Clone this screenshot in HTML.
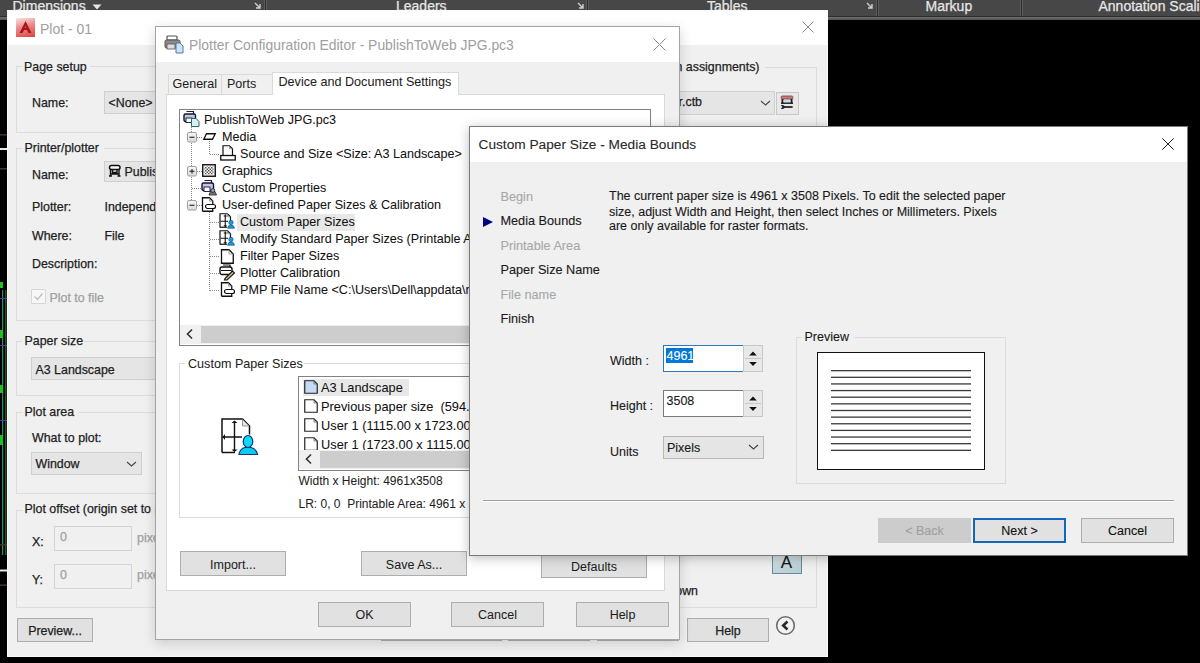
<!DOCTYPE html>
<html><head><meta charset="utf-8"><style>
html,body{margin:0;padding:0}
body{width:1200px;height:663px;overflow:hidden;position:relative;background:#000;font-family:"Liberation Sans",sans-serif}
.t{position:absolute;white-space:pre}
svg{overflow:visible}
</style></head><body>
<div style="position:absolute;left:0;top:0;width:1200px;height:16px;background:#474747"></div>
<div style="position:absolute;left:0px;top:16px;width:1200px;height:1px;background:#2e2e2e"></div>
<div style="position:absolute;left:0px;top:17px;width:1200px;height:3px;background:linear-gradient(#707070,#505050)"></div>
<div style="position:absolute;left:264px;top:0px;width:1px;height:16px;background:#5a5a5a"></div>
<div style="position:absolute;left:265px;top:0px;width:1px;height:16px;background:#2f2f2f"></div>
<div style="position:absolute;left:266px;top:0px;width:1px;height:16px;background:#5a5a5a"></div>
<div style="position:absolute;left:586px;top:0px;width:1px;height:16px;background:#5a5a5a"></div>
<div style="position:absolute;left:587px;top:0px;width:1px;height:16px;background:#2f2f2f"></div>
<div style="position:absolute;left:588px;top:0px;width:1px;height:16px;background:#5a5a5a"></div>
<div style="position:absolute;left:876px;top:0px;width:1px;height:16px;background:#5a5a5a"></div>
<div style="position:absolute;left:877px;top:0px;width:1px;height:16px;background:#2f2f2f"></div>
<div style="position:absolute;left:878px;top:0px;width:1px;height:16px;background:#5a5a5a"></div>
<div style="position:absolute;left:1020px;top:0px;width:1px;height:16px;background:#5a5a5a"></div>
<div style="position:absolute;left:1021px;top:0px;width:1px;height:16px;background:#2f2f2f"></div>
<div style="position:absolute;left:1022px;top:0px;width:1px;height:16px;background:#5a5a5a"></div>
<div class="t" style="left:12.5px;top:-1.20px;font-size:14px;line-height:14px;color:#e6e6e6;-webkit-text-stroke:0.25px #e6e6e6;">Dimensions</div>
<div class="t" style="left:396px;top:-1.20px;font-size:14px;line-height:14px;color:#e6e6e6;-webkit-text-stroke:0.25px #e6e6e6;">Leaders</div>
<div class="t" style="left:707px;top:-1.20px;font-size:14px;line-height:14px;color:#e6e6e6;-webkit-text-stroke:0.25px #e6e6e6;">Tables</div>
<div class="t" style="left:925.5px;top:-1.20px;font-size:14px;line-height:14px;color:#e6e6e6;-webkit-text-stroke:0.25px #e6e6e6;">Markup</div>
<div class="t" style="left:1098.5px;top:-1.20px;font-size:14px;line-height:14px;color:#e6e6e6;-webkit-text-stroke:0.25px #e6e6e6;">Annotation Scaling</div>
<svg style="position:absolute;left:92px;top:4px;" width="10" height="6" viewBox="0 0 10 6"><polygon points="0.5,0.5 9.5,0.5 5,5.5" fill="#e6e6e6"/></svg>
<svg style="position:absolute;left:254px;top:2px;" width="7" height="7" viewBox="0 0 7 7"><path d="M1,1 L5.5,5.5 M6,2 L6,6 L2,6" fill="none" stroke="#d0d0d0" stroke-width="1.4"/></svg>
<svg style="position:absolute;left:577px;top:2px;" width="7" height="7" viewBox="0 0 7 7"><path d="M1,1 L5.5,5.5 M6,2 L6,6 L2,6" fill="none" stroke="#d0d0d0" stroke-width="1.4"/></svg>
<svg style="position:absolute;left:865.5px;top:2px;" width="7" height="7" viewBox="0 0 7 7"><path d="M1,1 L5.5,5.5 M6,2 L6,6 L2,6" fill="none" stroke="#d0d0d0" stroke-width="1.4"/></svg>
<svg style="position:absolute;left:0px;top:100px;" width="7" height="520" viewBox="0 0 7 520">
<rect x="0" y="34" width="7" height="1.5" fill="#4a302c"/>
<rect x="0" y="48" width="7" height="2" fill="#e8e8e8"/>
<rect x="0" y="68" width="7" height="1.5" fill="#4a302c"/>
<rect x="2" y="190" width="1.2" height="265" fill="#2f8f7f"/>
<rect x="5" y="190" width="1.5" height="265" fill="#3aa03a" opacity="0.55"/>
<rect x="0" y="182" width="3" height="6" fill="#20c020"/>
<rect x="0" y="230" width="3" height="8" fill="#20c020"/>
<rect x="0" y="285" width="3" height="8" fill="#20c020"/>
<rect x="0" y="335" width="3" height="10" fill="#20c020"/>
<rect x="0" y="198" width="7" height="1" fill="#5a3aa0"/>
<rect x="0" y="245" width="7" height="1" fill="#5a3aa0"/>
<rect x="0" y="320" width="7" height="1" fill="#5a3aa0"/>
<rect x="0" y="444" width="7" height="1.5" fill="#4a302c"/>
<rect x="0" y="469.5" width="7" height="2" fill="#e8e8e8"/>
<rect x="0" y="484.5" width="7" height="1.5" fill="#4a302c"/>
</svg>
<div style="position:absolute;left:7px;top:10px;width:821px;height:647px;background:#f0f0f0;border:1px solid #fafafa;box-sizing:border-box;"></div>
<div style="position:absolute;left:8px;top:11px;width:819px;height:34px;background:#ffffff"></div>
<div style="position:absolute;left:16px;top:18px;width:19px;height:19px;background:linear-gradient(165deg,#fbe4e4,#ec8a8a 45%,#d84444);"></div>
<svg style="position:absolute;left:16px;top:18px;" width="19" height="19" viewBox="0 0 19 19"><path d="M9.5,3 L3.5,15 L6.5,15 L8,12 L11,12 L12.5,15 L15.5,15 Z" fill="#a8141a"/><path d="M9.5,7 L8.5,10 L10.5,10 Z" fill="#d84848"/></svg>
<div class="t" style="left:40px;top:21.80px;font-size:14px;line-height:14px;color:#a0a0a0;-webkit-text-stroke:0.25px #a0a0a0;-webkit-text-stroke:0">Plot - 01</div>
<svg style="position:absolute;left:802px;top:21px;" width="12" height="12" viewBox="0 0 12 12"><path d="M0.5,0.5 L11.5,11.5 M11.5,0.5 L0.5,11.5" stroke="#8a8a8a" stroke-width="1"/></svg>
<div style="position:absolute;left:16px;top:66px;width:282px;height:65px;border:1px solid #dcdcdc;"></div>
<div style="position:absolute;left:22px;top:62px;width:68px;height:10px;background:#f0f0f0"></div>
<div class="t" style="left:24px;top:60.66px;font-size:12.4px;line-height:12.4px;color:#1e1e1e;-webkit-text-stroke:0.25px #1e1e1e;">Page setup</div>
<div class="t" style="left:32px;top:96.66px;font-size:12.4px;line-height:12.4px;color:#1e1e1e;-webkit-text-stroke:0.25px #1e1e1e;">Name:</div>
<div style="position:absolute;left:104px;top:91px;width:194px;height:21px;background:#e5e5e5;border:1px solid #cfcfcf;"></div>
<div class="t" style="left:108.5px;top:96.66px;font-size:12.4px;line-height:12.4px;color:#1e1e1e;-webkit-text-stroke:0.25px #1e1e1e;">&lt;None&gt;</div>
<div style="position:absolute;left:16px;top:148px;width:282px;height:171px;border:1px solid #dcdcdc;"></div>
<div style="position:absolute;left:22px;top:142px;width:82px;height:10px;background:#f0f0f0"></div>
<div class="t" style="left:24.5px;top:141.96px;font-size:12.4px;line-height:12.4px;color:#1e1e1e;-webkit-text-stroke:0.25px #1e1e1e;">Printer/plotter</div>
<div class="t" style="left:32px;top:168.66px;font-size:12.4px;line-height:12.4px;color:#1e1e1e;-webkit-text-stroke:0.25px #1e1e1e;">Name:</div>
<div style="position:absolute;left:104px;top:161px;width:194px;height:19px;background:#e5e5e5;border:1px solid #cfcfcf;"></div>
<svg style="position:absolute;left:108px;top:164px;" width="14" height="14" viewBox="0 0 14 14"><rect x="1.5" y="1.5" width="10.5" height="4" rx="2" fill="#fff" stroke="#111" stroke-width="1.5"/><path d="M2.5,5.5 V11.5 M11,5.5 V11.5 M4.5,6 V8.5 H9 V6 M1,12 H4 M9.5,12 H12.5 M2.5,10 H11" fill="none" stroke="#111" stroke-width="1.4"/></svg>
<div class="t" style="left:124.5px;top:165.96px;font-size:12.4px;line-height:12.4px;color:#1e1e1e;-webkit-text-stroke:0.25px #1e1e1e;">PublishToWeb</div>
<div class="t" style="left:32px;top:201.16px;font-size:12.4px;line-height:12.4px;color:#1e1e1e;-webkit-text-stroke:0.25px #1e1e1e;">Plotter:</div>
<div class="t" style="left:104.5px;top:201.16px;font-size:12.4px;line-height:12.4px;color:#1e1e1e;-webkit-text-stroke:0.25px #1e1e1e;">Independent</div>
<div class="t" style="left:32px;top:229.66px;font-size:12.4px;line-height:12.4px;color:#1e1e1e;-webkit-text-stroke:0.25px #1e1e1e;">Where:</div>
<div class="t" style="left:104.5px;top:229.66px;font-size:12.4px;line-height:12.4px;color:#1e1e1e;-webkit-text-stroke:0.25px #1e1e1e;">File</div>
<div class="t" style="left:32px;top:258.16px;font-size:12.4px;line-height:12.4px;color:#1e1e1e;-webkit-text-stroke:0.25px #1e1e1e;">Description:</div>
<div style="position:absolute;left:31px;top:289px;width:15px;height:15px;border:1px solid #d6d6d6;box-sizing:border-box;background:#f7f7f7;border-radius:1px"></div>
<svg style="position:absolute;left:33px;top:291px;" width="11" height="11" viewBox="0 0 11 11"><polyline points="1.5,5.5 4.5,8.5 9.5,2.5" fill="none" stroke="#bdbdbd" stroke-width="1.3"/></svg>
<div class="t" style="left:49.5px;top:292.16px;font-size:12.4px;line-height:12.4px;color:#a0a0a0;-webkit-text-stroke:0.25px #a0a0a0;">Plot to file</div>
<div style="position:absolute;left:16px;top:341px;width:282px;height:53px;border:1px solid #dcdcdc;"></div>
<div style="position:absolute;left:22px;top:336px;width:62px;height:10px;background:#f0f0f0"></div>
<div class="t" style="left:24.5px;top:334.96px;font-size:12.4px;line-height:12.4px;color:#1e1e1e;-webkit-text-stroke:0.25px #1e1e1e;">Paper size</div>
<div style="position:absolute;left:31px;top:357px;width:267px;height:21px;background:#e5e5e5;border:1px solid #cfcfcf;"></div>
<div class="t" style="left:35.5px;top:363.66px;font-size:12.4px;line-height:12.4px;color:#1e1e1e;-webkit-text-stroke:0.25px #1e1e1e;">A3 Landscape</div>
<div style="position:absolute;left:16px;top:412px;width:282px;height:80px;border:1px solid #dcdcdc;"></div>
<div style="position:absolute;left:22px;top:407px;width:56px;height:10px;background:#f0f0f0"></div>
<div class="t" style="left:24.5px;top:405.96px;font-size:12.4px;line-height:12.4px;color:#1e1e1e;-webkit-text-stroke:0.25px #1e1e1e;">Plot area</div>
<div class="t" style="left:32px;top:432.16px;font-size:12.4px;line-height:12.4px;color:#1e1e1e;-webkit-text-stroke:0.25px #1e1e1e;">What to plot:</div>
<div style="position:absolute;left:31px;top:452px;width:109px;height:21px;background:#e5e5e5;border:1px solid #cfcfcf;"></div>
<div class="t" style="left:35.5px;top:458.16px;font-size:12.4px;line-height:12.4px;color:#1e1e1e;-webkit-text-stroke:0.25px #1e1e1e;">Window</div>
<svg style="position:absolute;left:126.0px;top:459.5px;" width="11" height="8" viewBox="0 0 11 8"><polyline points="1,2 5.5,6 10,2" fill="none" stroke="#444" stroke-width="1.1"/></svg>
<div style="position:absolute;left:16px;top:510px;width:282px;height:96px;border:1px solid #dcdcdc;"></div>
<div style="position:absolute;left:22px;top:505px;width:140px;height:10px;background:#f0f0f0"></div>
<div class="t" style="left:24.5px;top:503.46px;font-size:12.4px;line-height:12.4px;color:#1e1e1e;-webkit-text-stroke:0.25px #1e1e1e;">Plot offset (origin set to printable area)</div>
<div class="t" style="left:32px;top:536.16px;font-size:12.4px;line-height:12.4px;color:#1e1e1e;-webkit-text-stroke:0.25px #1e1e1e;">X:</div>
<div style="position:absolute;left:54px;top:526px;width:78px;height:25px;border:1px solid #d4d4d4;box-sizing:border-box;background:#f0f0f0"></div>
<div class="t" style="left:60px;top:531.16px;font-size:12.4px;line-height:12.4px;color:#a0a0a0;-webkit-text-stroke:0.25px #a0a0a0;">0</div>
<div class="t" style="left:137px;top:531.66px;font-size:12.4px;line-height:12.4px;color:#a0a0a0;-webkit-text-stroke:0.25px #a0a0a0;">pixels</div>
<div class="t" style="left:32px;top:573.66px;font-size:12.4px;line-height:12.4px;color:#1e1e1e;-webkit-text-stroke:0.25px #1e1e1e;">Y:</div>
<div style="position:absolute;left:54px;top:564px;width:78px;height:25px;border:1px solid #d4d4d4;box-sizing:border-box;background:#f0f0f0"></div>
<div class="t" style="left:60px;top:569.16px;font-size:12.4px;line-height:12.4px;color:#a0a0a0;-webkit-text-stroke:0.25px #a0a0a0;">0</div>
<div class="t" style="left:137px;top:569.16px;font-size:12.4px;line-height:12.4px;color:#a0a0a0;-webkit-text-stroke:0.25px #a0a0a0;">pixels</div>
<div style="position:absolute;left:17px;top:618px;width:74px;height:22px;background:#e1e1e1;border:1px solid #adadad;"></div>
<div class="t" style="left:-145.0px;width:400px;text-align:center;top:624.66px;font-size:12.4px;line-height:12.4px;color:#1e1e1e;-webkit-text-stroke:0.25px #1e1e1e;">Preview...</div>
<div style="position:absolute;left:600px;top:67px;width:215px;height:539px;border:1px solid #dcdcdc;"></div>
<div style="position:absolute;left:640px;top:60px;width:125px;height:12px;background:#f0f0f0"></div>
<div class="t" style="left:600px;top:60.66px;font-size:12.4px;line-height:12.4px;color:#1e1e1e;-webkit-text-stroke:0.25px #1e1e1e;left:auto;right:440.5px">Plot style table (pen assignments)</div>
<div style="position:absolute;left:600px;top:91px;width:173px;height:22px;background:#e5e5e5;border:1px solid #cfcfcf;"></div>
<div class="t" style="left:600px;top:96.16px;font-size:12.4px;line-height:12.4px;color:#1e1e1e;-webkit-text-stroke:0.25px #1e1e1e;left:auto;right:498px">Grayscale color.ctb</div>
<svg style="position:absolute;left:760.0px;top:99px;" width="11" height="8" viewBox="0 0 11 8"><polyline points="1,2 5.5,6 10,2" fill="none" stroke="#444" stroke-width="1.1"/></svg>
<div style="position:absolute;left:776px;top:92px;width:21px;height:21px;background:#e8e8e8;border:1px solid #c8c8c8;"></div>
<svg style="position:absolute;left:780px;top:95px;" width="15" height="15" viewBox="0 0 15 15"><rect x="1" y="1" width="12" height="3" rx="1.5" fill="#c87c7c" stroke="#7a3a3a" stroke-width="0.8"/><rect x="1.5" y="4" width="2" height="4.5" fill="#2a1a1a"/><rect x="10.5" y="4" width="2" height="4.5" fill="#2a1a1a"/><rect x="3.5" y="5" width="7" height="2.2" fill="#c0dde8"/><rect x="1" y="7.5" width="12" height="1.4" fill="#1a1a1a"/><path d="M4,11 H12 L13.2,12 L12,13 H4 Z" fill="#3a3a3a"/><path d="M0.8,10 H3 L4.6,11 V13 L3,14 H0.8 L2.4,12 Z" fill="#222"/></svg>
<div style="position:absolute;left:772px;top:545px;width:28px;height:27px;background:linear-gradient(160deg,#e4ecee,#b2ccd2);border:1px solid #6a8a9a;"></div>
<div class="t" style="left:586.5px;width:400px;text-align:center;top:554.25px;font-size:17px;line-height:17px;color:#111;-webkit-text-stroke:0.25px #111;-webkit-text-stroke:0.1px #111">A</div>
<div class="t" style="left:600px;top:585.16px;font-size:12.4px;line-height:12.4px;color:#1e1e1e;-webkit-text-stroke:0.25px #1e1e1e;left:auto;right:502px">Plot upside-down</div>
<div style="position:absolute;left:381px;top:618px;width:119px;height:21px;background:#e1e1e1;border:1px solid #adadad;"></div>
<div style="position:absolute;left:508px;top:618px;width:80px;height:21px;background:#e1e1e1;border:1px solid #adadad;"></div>
<div style="position:absolute;left:597px;top:618px;width:80px;height:21px;background:#e1e1e1;border:1px solid #adadad;"></div>
<div style="position:absolute;left:687px;top:618px;width:80px;height:22px;background:#e1e1e1;border:1px solid #adadad;"></div>
<div class="t" style="left:528.0px;width:400px;text-align:center;top:624.66px;font-size:12.4px;line-height:12.4px;color:#1e1e1e;-webkit-text-stroke:0.25px #1e1e1e;">Help</div>
<svg style="position:absolute;left:775px;top:615px;" width="21" height="21" viewBox="0 0 21 21"><circle cx="10.5" cy="10.5" r="8.8" fill="#f2f2f2" stroke="#6a6a6a" stroke-width="1.6"/><polyline points="12.5,6.5 8.2,10.5 12.5,14.5" fill="none" stroke="#2a2a2a" stroke-width="2.6"/></svg>
<div style="position:absolute;left:155px;top:26px;width:525px;height:614px;background:#f0f0f0;border:1px solid #a4a4a4;box-sizing:border-box;box-shadow:0 3px 12px rgba(0,0,0,0.16)"></div>
<div style="position:absolute;left:156px;top:27px;width:523px;height:35px;background:#ffffff"></div>
<svg style="position:absolute;left:164px;top:35px;" width="21" height="18" viewBox="0 0 21 18"><rect x="3" y="1" width="10" height="4" rx="1" fill="#fff" stroke="#555" stroke-width="1.2"/><rect x="1" y="5" width="15" height="8" rx="1.5" fill="#8a8a8a" stroke="#555"/><rect x="3" y="9" width="8" height="5" fill="#ddd" stroke="#555" stroke-width="0.8"/><path d="M12,8 h4 l3,3 v7 h-7 z" fill="#cfe3f7" stroke="#4a78b0"/></svg>
<div class="t" style="left:189px;top:39.19px;font-size:13.9px;line-height:13.9px;color:#a0a0a0;-webkit-text-stroke:0.05px #a0a0a0;-webkit-text-stroke:0">Plotter Configuration Editor - PublishToWeb JPG.pc3</div>
<svg style="position:absolute;left:653px;top:38px;" width="13" height="13" viewBox="0 0 13 13"><path d="M0.5,0.5 L12.5,12.5 M12.5,0.5 L0.5,12.5" stroke="#8a8a8a" stroke-width="1"/></svg>
<div style="position:absolute;left:168px;top:74px;width:54px;height:20px;background:#f0f0f0;border:1px solid #dadada;border-bottom:none;box-sizing:border-box"></div>
<div style="position:absolute;left:221px;top:74px;width:52px;height:20px;background:#f0f0f0;border:1px solid #dadada;border-bottom:none;box-sizing:border-box"></div>
<div style="position:absolute;left:166px;top:94px;width:499px;height:497px;background:#ffffff;border:1px solid #d9d9d9;box-sizing:border-box"></div>
<div style="position:absolute;left:272px;top:72px;width:187px;height:23px;background:#ffffff;border:1px solid #dadada;border-bottom:none;box-sizing:border-box"></div>
<div class="t" style="left:172.5px;top:78.08px;font-size:12.5px;line-height:12.5px;color:#1e1e1e;-webkit-text-stroke:0.05px #1e1e1e;">General</div>
<div class="t" style="left:227px;top:78.08px;font-size:12.5px;line-height:12.5px;color:#1e1e1e;-webkit-text-stroke:0.05px #1e1e1e;">Ports</div>
<div class="t" style="left:278.5px;top:75.99px;font-size:12.6px;line-height:12.6px;color:#1e1e1e;-webkit-text-stroke:0.05px #1e1e1e;">Device and Document Settings</div>
<div style="position:absolute;left:179px;top:109px;width:472px;height:237px;background:#fff;border:1px solid #828282;box-sizing:border-box"></div>
<div style="position:absolute;left:237px;top:214px;width:118px;height:17px;background:#e8e8e8"></div>
<div class="t" style="left:204px;top:114.29px;font-size:12.6px;line-height:12.6px;color:#111;-webkit-text-stroke:0.05px #111;">PublishToWeb JPG.pc3</div>
<div class="t" style="left:222px;top:131.29px;font-size:12.6px;line-height:12.6px;color:#111;-webkit-text-stroke:0.05px #111;">Media</div>
<div class="t" style="left:240px;top:148.09px;font-size:12.6px;line-height:12.6px;color:#111;-webkit-text-stroke:0.05px #111;">Source and Size &lt;Size: A3 Landscape&gt;</div>
<div class="t" style="left:222px;top:165.09px;font-size:12.6px;line-height:12.6px;color:#111;-webkit-text-stroke:0.05px #111;">Graphics</div>
<div class="t" style="left:222px;top:182.09px;font-size:12.6px;line-height:12.6px;color:#111;-webkit-text-stroke:0.05px #111;">Custom Properties</div>
<div class="t" style="left:222px;top:199.09px;font-size:12.6px;line-height:12.6px;color:#111;-webkit-text-stroke:0.05px #111;">User-defined Paper Sizes &amp; Calibration</div>
<div class="t" style="left:240px;top:216.09px;font-size:12.6px;line-height:12.6px;color:#111;-webkit-text-stroke:0.05px #111;">Custom Paper Sizes</div>
<div class="t" style="left:240px;top:233.09px;font-size:12.6px;line-height:12.6px;color:#111;-webkit-text-stroke:0.05px #111;">Modify Standard Paper Sizes (Printable Area)</div>
<div class="t" style="left:240px;top:250.09px;font-size:12.6px;line-height:12.6px;color:#111;-webkit-text-stroke:0.05px #111;">Filter Paper Sizes</div>
<div class="t" style="left:240px;top:267.09px;font-size:12.6px;line-height:12.6px;color:#111;-webkit-text-stroke:0.05px #111;">Plotter Calibration</div>
<div class="t" style="left:240px;top:284.09px;font-size:12.6px;line-height:12.6px;color:#111;-webkit-text-stroke:0.05px #111;">PMP File Name &lt;C:\Users\Dell\appdata\roaming\autodesk&gt;</div>
<svg style="position:absolute;left:180px;top:110px;" width="60" height="190" viewBox="0 0 60 190">
<path d="M11.5,17 V23 M11.5,33 V57 M11.5,67 V91 M17,27.5 H23 M17,61.5 H23 M12,78.5 H22 M17,95.5 H23" fill="none" stroke="#8a8a8a" stroke-width="1" stroke-dasharray="1,1"/>
<path d="M29.5,31 V45 M30,44.5 H40" fill="none" stroke="#8a8a8a" stroke-width="1" stroke-dasharray="1,1"/>
<path d="M29.5,102 V181 M30,112.5 H40 M30,129.5 H40 M30,146.5 H40 M30,163.5 H40 M30,180.5 H40" fill="none" stroke="#8a8a8a" stroke-width="1" stroke-dasharray="1,1"/>
</svg>
<svg style="position:absolute;left:187px;top:132px;" width="10" height="11" viewBox="0 0 10 11"><defs><linearGradient id="eg" x1="0" y1="0" x2="0" y2="1"><stop offset="0" stop-color="#f8f8f8"/><stop offset="1" stop-color="#d8d8d8"/></linearGradient></defs><rect x="0.5" y="0.5" width="9" height="9.5" rx="1.5" fill="url(#eg)" stroke="#a0a0a0"/><path d="M2.5,5.25 H7.5" stroke="#222" stroke-width="1.1"/></svg>
<svg style="position:absolute;left:187px;top:166px;" width="10" height="11" viewBox="0 0 10 11"><defs><linearGradient id="eg" x1="0" y1="0" x2="0" y2="1"><stop offset="0" stop-color="#f8f8f8"/><stop offset="1" stop-color="#d8d8d8"/></linearGradient></defs><rect x="0.5" y="0.5" width="9" height="9.5" rx="1.5" fill="url(#eg)" stroke="#a0a0a0"/><path d="M2.5,5.25 H7.5" stroke="#222" stroke-width="1.1"/><path d="M5,3 V7.5" stroke="#222" stroke-width="1.1"/></svg>
<svg style="position:absolute;left:187px;top:200px;" width="10" height="11" viewBox="0 0 10 11"><defs><linearGradient id="eg" x1="0" y1="0" x2="0" y2="1"><stop offset="0" stop-color="#f8f8f8"/><stop offset="1" stop-color="#d8d8d8"/></linearGradient></defs><rect x="0.5" y="0.5" width="9" height="9.5" rx="1.5" fill="url(#eg)" stroke="#a0a0a0"/><path d="M2.5,5.25 H7.5" stroke="#222" stroke-width="1.1"/></svg>
<svg style="position:absolute;left:183px;top:111px;" width="17" height="16" viewBox="0 0 17 16"><path d="M3.5,0.5 H10.5 V3" fill="none" stroke="#1a1a3a" stroke-width="1.2"/>
<rect x="1" y="3" width="11.5" height="7.5" rx="1.5" fill="#c4c8dc" stroke="#14143a" stroke-width="1.4"/>
<rect x="3" y="7" width="6" height="4.5" fill="#fff" stroke="#14143a" stroke-width="0.9"/>
<path d="M8.5,7.5 H13 L16,10.5 V15.5 H8.5 Z" fill="#d8f0ec" stroke="#2a6a6a" stroke-width="1"/></svg>
<svg style="position:absolute;left:203px;top:133px;" width="13" height="7" viewBox="0 0 13 7"><polygon points="3.5,0.75 12.25,0.75 9.5,6.25 0.75,6.25" fill="none" stroke="#111" stroke-width="1.3"/></svg>
<svg style="position:absolute;left:220px;top:145px;" width="16" height="16" viewBox="0 0 16 16"><path d="M3,10 V0.75 H9.5 L12.5,3.75 V10" fill="#fff" stroke="#111" stroke-width="1.2"/><path d="M9.5,0.75 V3.75 H12.5" fill="none" stroke="#888" stroke-width="0.8"/>
<rect x="0.75" y="10.5" width="14.5" height="4.5" fill="#fff" stroke="#111" stroke-width="1.3"/></svg>
<svg style="position:absolute;left:202px;top:164px;" width="14" height="13" viewBox="0 0 14 13"><defs><pattern id="ck" width="3" height="3" patternUnits="userSpaceOnUse"><rect width="1.5" height="1.5" fill="#333"/><rect x="1.5" y="1.5" width="1.5" height="1.5" fill="#333"/></pattern></defs>
<rect x="0.75" y="0.75" width="12.5" height="11.5" fill="#fff" stroke="#111" stroke-width="1.4"/><rect x="2.5" y="2.5" width="9" height="8" fill="url(#ck)" opacity="0.8"/></svg>
<svg style="position:absolute;left:201px;top:180px;" width="17" height="16" viewBox="0 0 17 16"><path d="M3.5,0.5 H10.5 V3" fill="none" stroke="#1a1a3a" stroke-width="1.2"/>
<rect x="1" y="3" width="11.5" height="7.5" rx="1.5" fill="#c4c8dc" stroke="#14143a" stroke-width="1.4"/>
<rect x="3" y="7" width="6" height="4.5" fill="#fff" stroke="#14143a" stroke-width="0.9"/>
<path d="M8,15 H15.5 L14,11.5 H9.5 Z" fill="#777" stroke="#222" stroke-width="0.8"/><circle cx="11.75" cy="10.5" r="2" fill="#999" stroke="#222" stroke-width="0.8"/></svg>
<svg style="position:absolute;left:201px;top:197px;" width="15" height="15" viewBox="0 0 15 15"><path d="M1.5,14.25 V0.75 H8.5 L11.75,4 V7" fill="#fff" stroke="#111" stroke-width="1.3"/><path d="M8.5,0.75 V4 H11.75" fill="none" stroke="#888" stroke-width="0.8"/>
<path d="M1.5,14.25 H11.75 V12" fill="none" stroke="#111" stroke-width="1.3"/>
<rect x="4.5" y="7.5" width="10" height="4" rx="2" fill="#fff" stroke="#111" stroke-width="1.2"/></svg>
<svg style="position:absolute;left:219px;top:213px;" width="16" height="16" viewBox="0 0 16 16"><path d="M1,14.5 V0.75 H8.5 L11.5,3.75 V8" fill="#fff" stroke="#111" stroke-width="1.2"/><path d="M8.5,0.75 V3.75 H11.5" fill="none" stroke="#888" stroke-width="0.8"/>
<path d="M1,14.25 H8" stroke="#111" stroke-width="1.2"/><path d="M6.25,1.5 V14 M1.5,8.25 H9" stroke="#111" stroke-width="1.1"/>
<path d="M4.75,3 H7.75 M4.75,12.75 H7.75" stroke="#111" stroke-width="1"/>
<circle cx="12" cy="9.5" r="2.2" fill="#1e9ad6" stroke="#0a4a8a" stroke-width="0.6"/><path d="M8.5,15.25 Q9,12 12,12 Q15,12 15.5,15.25 Z" fill="#1e9ad6" stroke="#0a4a8a" stroke-width="0.6"/></svg>
<svg style="position:absolute;left:219px;top:230px;" width="16" height="16" viewBox="0 0 16 16"><path d="M1,14.5 V0.75 H8.5 L11.5,3.75 V8" fill="#fff" stroke="#111" stroke-width="1.2"/><path d="M8.5,0.75 V3.75 H11.5" fill="none" stroke="#888" stroke-width="0.8"/>
<path d="M1,14.25 H8" stroke="#111" stroke-width="1.2"/><path d="M6.25,1.5 V14 M1.5,8.25 H9" stroke="#111" stroke-width="1.1"/>
<path d="M4.75,3 H7.75 M4.75,12.75 H7.75" stroke="#111" stroke-width="1"/>
<circle cx="12" cy="9.5" r="2.2" fill="#1e9ad6" stroke="#0a4a8a" stroke-width="0.6"/><path d="M8.5,15.25 Q9,12 12,12 Q15,12 15.5,15.25 Z" fill="#1e9ad6" stroke="#0a4a8a" stroke-width="0.6"/></svg>
<svg style="position:absolute;left:220px;top:249px;" width="15" height="15" viewBox="0 0 15 15"><path d="M1.5,14.25 V0.75 H9 L13.25,5 V14.25 Z" fill="#fff" stroke="#111" stroke-width="1.3"/><path d="M9,0.75 V5 H13.25" fill="none" stroke="#888" stroke-width="0.8"/></svg>
<svg style="position:absolute;left:219px;top:264px;" width="17" height="16" viewBox="0 0 17 16"><path d="M4,1 H11 V3" fill="none" stroke="#111" stroke-width="1.2"/>
<rect x="1" y="3" width="12" height="7.5" rx="2" fill="#fff" stroke="#111" stroke-width="1.4"/>
<path d="M2,6.5 H12" stroke="#111" stroke-width="1"/>
<path d="M6,14.5 L13.5,7 L15.5,9 L8,16 L5.5,16 Z" fill="#d8c890" stroke="#111" stroke-width="1.1"/></svg>
<svg style="position:absolute;left:220px;top:282px;" width="15" height="15" viewBox="0 0 15 15"><path d="M1.5,14.25 V0.75 H8.5 L11.75,4 V7" fill="#fff" stroke="#111" stroke-width="1.3"/><path d="M8.5,0.75 V4 H11.75" fill="none" stroke="#888" stroke-width="0.8"/>
<path d="M1.5,14.25 H11.75 V12" fill="none" stroke="#111" stroke-width="1.3"/>
<rect x="4.5" y="7.5" width="10" height="4" rx="2" fill="#fff" stroke="#111" stroke-width="1.2"/></svg>
<div style="position:absolute;left:180px;top:325px;width:470px;height:19px;background:#f0f0f0"></div>
<div style="position:absolute;left:201px;top:326px;width:449px;height:17px;background:#cdcdcd"></div>
<svg style="position:absolute;left:185px;top:328px;" width="10" height="12" viewBox="0 0 10 12"><polyline points="7,1.5 2.5,6 7,10.5" fill="none" stroke="#333" stroke-width="1.6"/></svg>
<div style="position:absolute;left:179px;top:363px;width:470px;height:153px;border:1px solid #dcdcdc;"></div>
<div style="position:absolute;left:185px;top:357px;width:118px;height:12px;background:#fff"></div>
<div class="t" style="left:188px;top:357.99px;font-size:12.6px;line-height:12.6px;color:#1e1e1e;-webkit-text-stroke:0.05px #1e1e1e;">Custom Paper Sizes</div>
<div style="position:absolute;left:298px;top:376px;width:353px;height:95px;background:#fff;border:1px solid #828282;box-sizing:border-box"></div>
<div style="position:absolute;left:303px;top:379px;width:106px;height:17px;background:#e8e8e8"></div>
<svg style="position:absolute;left:304px;top:380px;" width="16" height="14" viewBox="0 0 16 14"><path d="M0.75,13.25 V0.75 H10 L13.25,4 V13.25 Z" fill="#c4dcf4" stroke="#222" stroke-width="1.2"/><path d="M10,0.75 V4 H13.25" fill="none" stroke="#666" stroke-width="0.8"/></svg>
<svg style="position:absolute;left:304px;top:399px;" width="16" height="14" viewBox="0 0 16 14"><path d="M0.75,13.25 V0.75 H10 L13.25,4 V13.25 Z" fill="#fff" stroke="#222" stroke-width="1.2"/><path d="M10,0.75 V4 H13.25" fill="none" stroke="#666" stroke-width="0.8"/></svg>
<svg style="position:absolute;left:304px;top:418px;" width="16" height="14" viewBox="0 0 16 14"><path d="M0.75,13.25 V0.75 H10 L13.25,4 V13.25 Z" fill="#fff" stroke="#222" stroke-width="1.2"/><path d="M10,0.75 V4 H13.25" fill="none" stroke="#666" stroke-width="0.8"/></svg>
<div style="position:absolute;left:299px;top:437px;width:30px;height:13px;overflow:hidden">
<svg style="position:absolute;left:5px;top:0px;" width="16" height="14" viewBox="0 0 16 14"><path d="M0.75,13.25 V0.75 H10 L13.25,4 V13.25 Z" fill="#fff" stroke="#222" stroke-width="1.2"/><path d="M10,0.75 V4 H13.25" fill="none" stroke="#666" stroke-width="0.8"/></svg>
</div>
<svg style="position:absolute;left:220px;top:417px;" width="40" height="40" viewBox="0 0 40 40"><path d="M2,35.5 V2 H22.5 L29.5,9 V17.5" fill="#fff" stroke="#111" stroke-width="1.5"/><path d="M22.5,2.5 V9 H29" fill="#e8e8e8" stroke="#999" stroke-width="1"/>
<path d="M2,35.5 H15" stroke="#111" stroke-width="1.5"/>
<path d="M14.5,5 V34 M2.5,20 H22" stroke="#111" stroke-width="1.4"/>
<path d="M11.5,6 L14.5,3.5 L17.5,6 Z M11.5,32.5 L14.5,35 L17.5,32.5 Z M5,17 L2.5,20 L5,23 Z" fill="#111"/>
<ellipse cx="28" cy="24.5" rx="4.8" ry="6" fill="#10d8f8" stroke="#0a3a7a" stroke-width="1.2"/>
<path d="M19,37.5 Q20,31.5 25,30.5 L31,30.5 Q36,31.5 37.5,37.5 Z" fill="#10c8f0" stroke="#0a3a7a" stroke-width="1.2"/></svg>
<div class="t" style="left:321px;top:382.32px;font-size:12.8px;line-height:12.8px;color:#111;-webkit-text-stroke:0.05px #111;">A3 Landscape</div>
<div class="t" style="left:321px;top:401.02px;font-size:12.8px;line-height:12.8px;color:#111;-webkit-text-stroke:0.05px #111;">Previous paper size  (594.00 x 420.00 MM)</div>
<div class="t" style="left:321px;top:419.82px;font-size:12.8px;line-height:12.8px;color:#111;-webkit-text-stroke:0.05px #111;">User 1 (1115.00 x 1723.00 Pixels)</div>
<div style="position:absolute;left:299px;top:433px;width:350px;height:17px;overflow:hidden">
<div class="t" style="left:22px;top:5.82px;font-size:12.8px;line-height:12.8px;color:#111;-webkit-text-stroke:0.05px #111;">User 1 (1723.00 x 1115.00 Pixels)</div>
</div>
<div style="position:absolute;left:299px;top:450px;width:351px;height:19px;background:#f0f0f0"></div>
<div style="position:absolute;left:320px;top:451px;width:330px;height:17px;background:#cdcdcd"></div>
<svg style="position:absolute;left:304px;top:453px;" width="10" height="12" viewBox="0 0 10 12"><polyline points="7,1.5 2.5,6 7,10.5" fill="none" stroke="#333" stroke-width="1.6"/></svg>
<div class="t" style="left:298.5px;top:474.90px;font-size:12px;line-height:12px;color:#1e1e1e;-webkit-text-stroke:0.05px #1e1e1e;">Width x Height: 4961x3508</div>
<div class="t" style="left:298.5px;top:497.80px;font-size:12px;line-height:12px;color:#1e1e1e;-webkit-text-stroke:0.05px #1e1e1e;">LR: 0, 0  Printable Area: 4961 x 3508</div>
<div style="position:absolute;left:180px;top:551px;width:104px;height:23px;background:#e1e1e1;border:1px solid #adadad;"></div>
<div class="t" style="left:33.0px;width:400px;text-align:center;top:558.58px;font-size:12.5px;line-height:12.5px;color:#1e1e1e;-webkit-text-stroke:0.05px #1e1e1e;">Import...</div>
<div style="position:absolute;left:361px;top:551px;width:104px;height:23px;background:#e1e1e1;border:1px solid #adadad;"></div>
<div class="t" style="left:214.0px;width:400px;text-align:center;top:558.58px;font-size:12.5px;line-height:12.5px;color:#1e1e1e;-webkit-text-stroke:0.05px #1e1e1e;">Save As...</div>
<div style="position:absolute;left:541px;top:554px;width:104px;height:22px;background:#e1e1e1;border:1px solid #adadad;"></div>
<div class="t" style="left:394.0px;width:400px;text-align:center;top:560.58px;font-size:12.5px;line-height:12.5px;color:#1e1e1e;-webkit-text-stroke:0.05px #1e1e1e;">Defaults</div>
<div style="position:absolute;left:318px;top:602px;width:91px;height:23px;background:#e1e1e1;border:1px solid #adadad;"></div>
<div class="t" style="left:164.5px;width:400px;text-align:center;top:609.08px;font-size:12.5px;line-height:12.5px;color:#1e1e1e;-webkit-text-stroke:0.05px #1e1e1e;">OK</div>
<div style="position:absolute;left:451px;top:602px;width:91px;height:23px;background:#e1e1e1;border:1px solid #adadad;"></div>
<div class="t" style="left:297.5px;width:400px;text-align:center;top:609.08px;font-size:12.5px;line-height:12.5px;color:#1e1e1e;-webkit-text-stroke:0.05px #1e1e1e;">Cancel</div>
<div style="position:absolute;left:576px;top:602px;width:91px;height:23px;background:#e1e1e1;border:1px solid #adadad;"></div>
<div class="t" style="left:422.5px;width:400px;text-align:center;top:609.08px;font-size:12.5px;line-height:12.5px;color:#1e1e1e;-webkit-text-stroke:0.05px #1e1e1e;">Help</div>
<div style="position:absolute;left:469px;top:126px;width:719px;height:430px;background:#f0f0f0;border:1px solid #7a7a7a;box-sizing:border-box;box-shadow:0 2px 11px rgba(0,0,0,0.26)"></div>
<div style="position:absolute;left:470px;top:127px;width:717px;height:35px;background:#ffffff"></div>
<div class="t" style="left:478.5px;top:138.05px;font-size:13.7px;line-height:13.7px;color:#2a2a2a;-webkit-text-stroke:0.12px #2a2a2a;-webkit-text-stroke:0.1px #2a2a2a">Custom Paper Size - Media Bounds</div>
<svg style="position:absolute;left:1162px;top:138px;" width="12" height="12" viewBox="0 0 12 12"><path d="M0.3,0.3 L11.7,11.7 M11.7,0.3 L0.3,11.7" stroke="#222" stroke-width="1"/></svg>
<div class="t" style="left:500.5px;top:190.71px;font-size:12.7px;line-height:12.7px;color:#a8a8a8;-webkit-text-stroke:0.12px #a8a8a8;">Begin</div>
<div class="t" style="left:500.5px;top:215.10px;font-size:12.7px;line-height:12.7px;color:#1a1a1a;-webkit-text-stroke:0.12px #1a1a1a;">Media Bounds</div>
<div class="t" style="left:500.5px;top:239.60px;font-size:12.7px;line-height:12.7px;color:#a8a8a8;-webkit-text-stroke:0.12px #a8a8a8;">Printable Area</div>
<div class="t" style="left:500.5px;top:263.80px;font-size:12.7px;line-height:12.7px;color:#1a1a1a;-webkit-text-stroke:0.12px #1a1a1a;">Paper Size Name</div>
<div class="t" style="left:500.5px;top:288.70px;font-size:12.7px;line-height:12.7px;color:#a8a8a8;-webkit-text-stroke:0.12px #a8a8a8;">File name</div>
<div class="t" style="left:500.5px;top:312.90px;font-size:12.7px;line-height:12.7px;color:#1a1a1a;-webkit-text-stroke:0.12px #1a1a1a;">Finish</div>
<svg style="position:absolute;left:482px;top:216px;" width="12" height="12" viewBox="0 0 12 12"><polygon points="1,1 11,6 1,11" fill="#000080"/></svg>
<div class="t" style="left:609px;top:190.38px;font-size:12.5px;line-height:12.5px;color:#1a1a1a;-webkit-text-stroke:0.12px #1a1a1a;">The current paper size is 4961 x 3508 Pixels. To edit the selected paper</div>
<div class="t" style="left:609px;top:205.57px;font-size:12.5px;line-height:12.5px;color:#1a1a1a;-webkit-text-stroke:0.12px #1a1a1a;">size, adjust Width and Height, then select Inches or Millimeters. Pixels</div>
<div class="t" style="left:609px;top:220.38px;font-size:12.5px;line-height:12.5px;color:#1a1a1a;-webkit-text-stroke:0.12px #1a1a1a;">are only available for raster formats.</div>
<div class="t" style="left:610px;top:354.88px;font-size:12.5px;line-height:12.5px;color:#1a1a1a;-webkit-text-stroke:0.12px #1a1a1a;">Width :</div>
<div class="t" style="left:610px;top:400.18px;font-size:12.5px;line-height:12.5px;color:#1a1a1a;-webkit-text-stroke:0.12px #1a1a1a;">Height :</div>
<div class="t" style="left:610px;top:446.07px;font-size:12.5px;line-height:12.5px;color:#1a1a1a;-webkit-text-stroke:0.12px #1a1a1a;">Units</div>
<div style="position:absolute;left:663px;top:345px;width:81px;height:27px;background:#fff;border:1px solid #2b79c2;box-sizing:border-box"></div>
<div style="position:absolute;left:743px;top:345px;width:20px;height:27px;background:#e8e8e8;border:1px solid #c8c8c8;box-sizing:border-box"></div>
<div style="position:absolute;left:745px;top:358px;width:16px;height:1px;background:#c8c8c8"></div>
<svg style="position:absolute;left:747px;top:348px;" width="12" height="9" viewBox="0 0 12 9"><polygon points="2.2,7.5 6,3.5 9.8,7.5" fill="#111"/></svg>
<svg style="position:absolute;left:747px;top:360px;" width="12" height="9" viewBox="0 0 12 9"><polygon points="2.2,2 6,6 9.8,2" fill="#111"/></svg>
<div style="position:absolute;left:666px;top:348px;width:27px;height:15px;background:#0078d7"></div>
<div class="t" style="left:666.5px;top:350.07px;font-size:12.5px;line-height:12.5px;color:#ffffff;-webkit-text-stroke:0.12px #ffffff;">4961</div>
<div style="position:absolute;left:663px;top:390px;width:81px;height:27px;background:#fff;border:1px solid #7a7a7a;box-sizing:border-box"></div>
<div style="position:absolute;left:743px;top:390px;width:20px;height:27px;background:#e8e8e8;border:1px solid #c8c8c8;box-sizing:border-box"></div>
<div style="position:absolute;left:745px;top:403px;width:16px;height:1px;background:#c8c8c8"></div>
<svg style="position:absolute;left:747px;top:393px;" width="12" height="9" viewBox="0 0 12 9"><polygon points="2.2,7.5 6,3.5 9.8,7.5" fill="#111"/></svg>
<svg style="position:absolute;left:747px;top:405px;" width="12" height="9" viewBox="0 0 12 9"><polygon points="2.2,2 6,6 9.8,2" fill="#111"/></svg>
<div class="t" style="left:666.5px;top:395.47px;font-size:12.5px;line-height:12.5px;color:#1a1a1a;-webkit-text-stroke:0.12px #1a1a1a;">3508</div>
<div style="position:absolute;left:663px;top:436px;width:99px;height:21px;background:#e5e5e5;border:1px solid #b8b8b8;"></div>
<div class="t" style="left:667px;top:441.57px;font-size:12.5px;line-height:12.5px;color:#1a1a1a;-webkit-text-stroke:0.12px #1a1a1a;">Pixels</div>
<svg style="position:absolute;left:747.5px;top:443px;" width="11" height="8" viewBox="0 0 11 8"><polyline points="1,2 5.5,6 10,2" fill="none" stroke="#444" stroke-width="1.1"/></svg>
<div style="position:absolute;left:796px;top:337px;width:208px;height:145px;border:1px solid #dcdcdc;"></div>
<div style="position:absolute;left:802px;top:330px;width:52px;height:12px;background:#f0f0f0"></div>
<div class="t" style="left:804.5px;top:330.57px;font-size:12.5px;line-height:12.5px;color:#1a1a1a;-webkit-text-stroke:0.12px #1a1a1a;">Preview</div>
<div style="position:absolute;left:817px;top:352px;width:168px;height:118px;background:#fff;border:1.5px solid #111;box-sizing:border-box"></div>
<svg style="position:absolute;left:831px;top:370px;" width="140" height="82" viewBox="0 0 140 82"><rect x="0" y="0.00" width="140" height="1.3" fill="#3a3a3a"/><rect x="0" y="6.64" width="140" height="1.3" fill="#3a3a3a"/><rect x="0" y="13.28" width="140" height="1.3" fill="#3a3a3a"/><rect x="0" y="19.92" width="140" height="1.3" fill="#3a3a3a"/><rect x="0" y="26.56" width="140" height="1.3" fill="#3a3a3a"/><rect x="0" y="33.20" width="140" height="1.3" fill="#3a3a3a"/><rect x="0" y="39.84" width="140" height="1.3" fill="#3a3a3a"/><rect x="0" y="46.48" width="140" height="1.3" fill="#3a3a3a"/><rect x="0" y="53.12" width="140" height="1.3" fill="#3a3a3a"/><rect x="0" y="59.76" width="140" height="1.3" fill="#3a3a3a"/><rect x="0" y="66.40" width="140" height="1.3" fill="#3a3a3a"/><rect x="0" y="73.04" width="140" height="1.3" fill="#3a3a3a"/><rect x="0" y="79.68" width="140" height="1.3" fill="#3a3a3a"/></svg>
<div style="position:absolute;left:483px;top:500px;width:691px;height:1px;background:#a0a0a0"></div>
<div style="position:absolute;left:483px;top:501px;width:691px;height:1px;background:#ffffff"></div>
<div style="position:absolute;left:878px;top:518px;width:91px;height:23px;background:#cccccc;border:1px solid #cccccc;"></div>
<div class="t" style="left:724.5px;width:400px;text-align:center;top:524.98px;font-size:12.5px;line-height:12.5px;color:#a0a0a0;-webkit-text-stroke:0.12px #a0a0a0;">&lt; Back</div>
<div style="position:absolute;left:973px;top:518px;width:89px;height:21px;background:#e1e1e1;border:2px solid #1466b8;"></div>
<div class="t" style="left:819.5px;width:400px;text-align:center;top:524.98px;font-size:12.5px;line-height:12.5px;color:#111;-webkit-text-stroke:0.12px #111;">Next &gt;</div>
<div style="position:absolute;left:1081px;top:518px;width:91px;height:23px;background:#e1e1e1;border:1px solid #adadad;"></div>
<div class="t" style="left:927.5px;width:400px;text-align:center;top:524.98px;font-size:12.5px;line-height:12.5px;color:#111;-webkit-text-stroke:0.12px #111;">Cancel</div>
</body></html>
